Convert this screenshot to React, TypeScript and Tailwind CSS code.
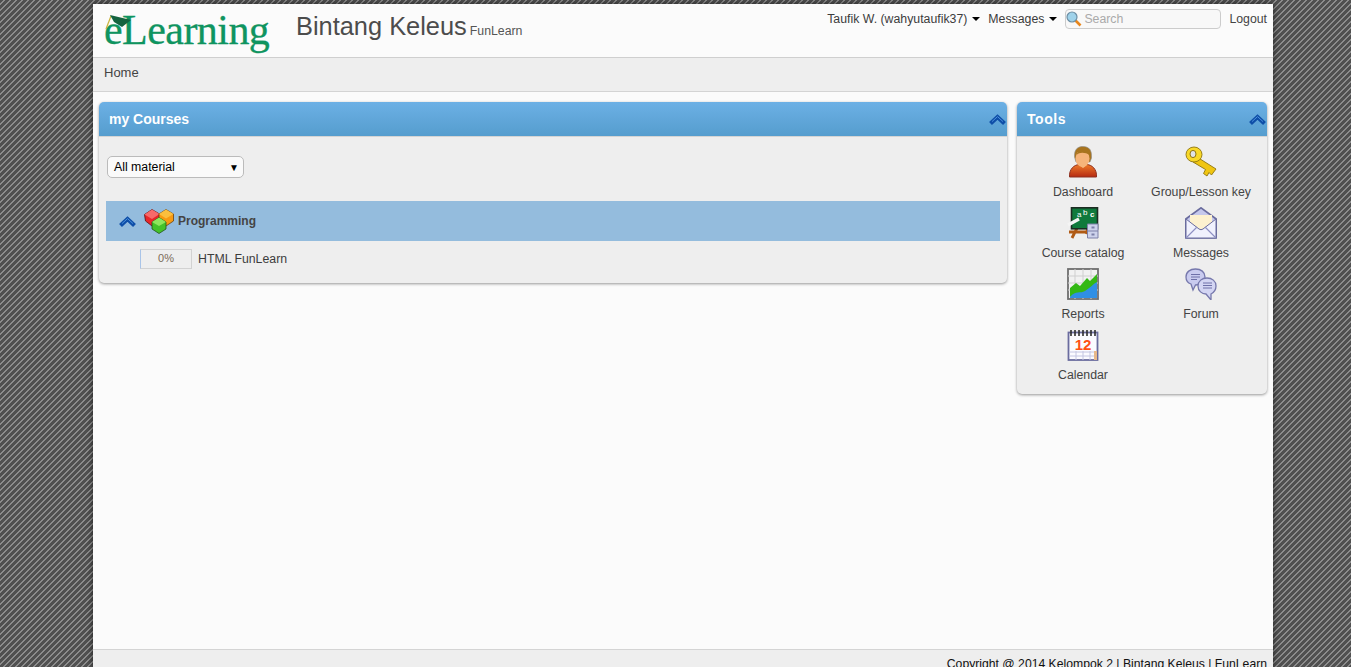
import React from "react";

const Chevron = ({ className = "" }: { className?: string }) => (
  <svg width="17" height="13" viewBox="0 0 17 13" className={className}>
    <path d="M1.5 10.5 L8.5 4 L15.5 10.5" fill="none" stroke="#0f4fa8" strokeWidth="4.2" strokeLinejoin="miter" />
    <path d="M3 8.6 L8.5 3.6 L14 8.6" fill="none" stroke="#4a90dc" strokeWidth="1" />
  </svg>
);

const Caret = () => <span className="inline-block w-0 h-0 border-x-4 border-x-transparent border-t-4 border-t-black ml-[5px] align-middle" />;

const UserIcon = () => (
  <svg width="32" height="32" viewBox="0 0 32 32">
    <defs>
      <linearGradient id="shirt" x1="0" y1="0" x2="0" y2="1">
        <stop offset="0" stopColor="#ee7a2a" />
        <stop offset="1" stopColor="#b52a12" />
      </linearGradient>
    </defs>
    <path d="M2.5 31 C2 23 7 19 12 18.5 L20 18.5 C25 19 30 23 29.5 31 Z" fill="url(#shirt)" stroke="#8e3020" />
    <path d="M11.5 18.5 L16 22 L20.5 18.5 Z" fill="#f6c08a" />
    <path d="M7.5 11 C7 3 11 0.5 16 0.5 C22 0.5 25 4 24.5 12 L23 16 L9 16 Z" fill="#a8741e" stroke="#8c8c8c" strokeWidth=".6" />
    <ellipse cx="15.5" cy="12.5" rx="7" ry="8.5" fill="#f6b47a" />
    <path d="M9 10 C11 6 18 6 22.5 9 L22 4 L12 3 Z" fill="#a8741e" />
  </svg>
);

const KeyIcon = () => (
  <svg width="32" height="32" viewBox="0 0 32 32">
    <path d="M12 11 L31 23 L26.5 29 L24 26.5 L22 30 L18.5 27.5 L20.5 23.5 L8 16 Z" fill="#f0c510" stroke="#8f7510" strokeWidth=".9" />
    <ellipse cx="9" cy="8.5" rx="8" ry="7.5" fill="#f8d828" stroke="#8f7510" strokeWidth=".9" />
    <ellipse cx="8" cy="8" rx="3" ry="3.6" fill="#dfe2e8" stroke="#8f7510" strokeWidth="1" />
  </svg>
);

const BoardIcon = () => (
  <svg width="32" height="32" viewBox="0 0 32 32">
    <path d="M10 21 L5 31 M21 21 L19 27 M2 25 H24" stroke="#b05a14" strokeWidth="2.8" fill="none" />
    <rect x="4.5" y="0.8" width="26" height="21" fill="#0f7a3c" stroke="#1c2c22" strokeWidth="1.6" />
    <path d="M1 18 L12 12" stroke="#f4f4f4" strokeWidth="3.2" />
    <text x="10" y="10" fontSize="8" fill="#fff" fontFamily="'Liberation Sans',sans-serif">a</text>
    <text x="16" y="8" fontSize="8" fill="#fff" fontFamily="'Liberation Sans',sans-serif">b</text>
    <text x="23" y="10" fontSize="8" fontWeight="bold" fill="#fff" fontFamily="'Liberation Sans',sans-serif">c</text>
    <path d="M20.5 17 H31 V31 H20.5 Z" fill="#cdd2ec" stroke="#7c80a8" />
    <path d="M20.5 24 H31" stroke="#7c80a8" />
    <rect x="24.5" y="19.5" width="3" height="2" fill="#7c80a8" />
    <rect x="24.5" y="26.5" width="3" height="2" fill="#7c80a8" />
  </svg>
);

const MailIcon = () => (
  <svg width="32" height="32" viewBox="0 0 32 32">
    <path d="M0.8 12 L16 0.8 L31.2 12 V31 H0.8 Z" fill="#c5c8ec" stroke="#6a6c9e" strokeWidth="1.6" />
    <path d="M5 8 H27 V17 L16 24 L5 17 Z" fill="#fdf1cf" />
    <path d="M1 12 L14 22 Q16 23.5 18 22 L31 12 V31 H1 Z" fill="#f0f1fd" stroke="#6a6c9e" />
    <path d="M1 31 L12 20 M31 31 L20 20" stroke="#8e90c2" strokeWidth="1.2" />
  </svg>
);

const ChartIcon = () => (
  <svg width="32" height="32" viewBox="0 0 32 32">
    <rect x="1" y="1" width="30" height="30" fill="#f1f1f1" stroke="#6e6e6e" strokeWidth="1.8" />
    <path d="M1 8 H31 M1 15 H31 M1 22 H31 M8 1 V31 M16 1 V31 M24 1 V31" stroke="#cfcfcf" />
    <path d="M3 20 L9 15 L13 18 L20 10 L23 13 L30 6 V20 L3 29 Z" fill="#33b814" />
    <path d="M3 29 C9 22 13 26 18 23 C23 20 26 16 30 14 V30 H3 Z" fill="#2f8fe4" />
  </svg>
);

const ForumIcon = () => (
  <svg width="32" height="32" viewBox="0 0 32 32">
    <path d="M1 9 C1 4 5 1 10.5 1 C16 1 20 4 20 9 C20 14 16 17 10.5 17 L8 22 L6 16 C3 15 1 12 1 9 Z" fill="#c9cbef" stroke="#7678ac" strokeWidth="1.3" />
    <path d="M6 6.5 H15 M6 9 H15 M6 11.5 H12" stroke="#6e70a8" />
    <path d="M13 18 C13 13 17 10 22 10 C27 10 31 13 31 18 C31 23 28 25 26 26 L26 32 L21 26 C17 26 13 23 13 18 Z" fill="#d3d5f3" stroke="#7678ac" strokeWidth="1.3" />
    <path d="M18 15 H27 M18 17.5 H27 M18 20 H27" stroke="#6e70a8" />
  </svg>
);

const CalendarIcon = () => (
  <svg width="32" height="32" viewBox="0 0 32 32">
    <rect x="1.5" y="3.5" width="29" height="27.5" fill="#fbfbff" stroke="#6a6c9e" strokeWidth="1.8" />
    <path d="M2 23 H30 M2 27 H30 M9 22 V31 M16 22 V31 M23 22 V31" stroke="#c4c6e2" />
    <path d="M4 1 V7 M8 1 V7 M12 1 V7 M16 1 V7 M20 1 V7 M24 1 V7 M28 1 V7" stroke="#2e2e2e" strokeWidth="1.6" />
    <rect x="27" y="22" width="3" height="9" fill="#e8b98a" />
    <text x="16" y="21" fontSize="15" fontWeight="bold" fill="#ff5014" textAnchor="middle" fontFamily="'Liberation Sans',sans-serif">12</text>
  </svg>
);

const CubesIcon = () => (
  <svg width="30" height="25" viewBox="0 0 30 25" className="ml-[8px]">
    <path d="M0.5 5.5 L8 0.5 L15.5 5 L15 12 L8 17 L1.5 12 Z" fill="#e8262a" stroke="#5a1212" strokeWidth=".8" />
    <path d="M0.5 5.5 L8 10 L15.5 5 L8 0.5 Z" fill="#f76a6a" />
    <path d="M15 5 L22 0.5 L29.5 5 L29.5 12 L22 17 L15 12 Z" fill="#f79a12" stroke="#6a4210" strokeWidth=".8" />
    <path d="M15 5 L22 9.5 L29.5 5 L22 0.5 Z" fill="#fbbf3d" />
    <path d="M8 13 L15 8.5 L22 13 L22 20 L15 24.5 L8 20 Z" fill="#44c22a" stroke="#25561a" strokeWidth=".8" />
    <path d="M8 13 L15 17 L22 13 L15 8.5 Z" fill="#8ee65c" />
  </svg>
);

const SearchIcon = () => (
  <svg width="16" height="16" viewBox="0 0 16 16">
    <path d="M9.5 9.5 L14.5 14.5" stroke="#e8861c" strokeWidth="2.6" />
    <circle cx="6" cy="6" r="5" fill="#9fd2ea" stroke="#6c8ea4" strokeWidth="1.2" />
  </svg>
);

const tools: [string, React.ReactNode][] = [
  ["Dashboard", <UserIcon />],
  ["Group/Lesson key", <KeyIcon />],
  ["Course catalog", <BoardIcon />],
  ["Messages", <MailIcon />],
  ["Reports", <ChartIcon />],
  ["Forum", <ForumIcon />],
  ["Calendar", <CalendarIcon />],
];

const PanelHead = ({ title, spaced }: { title: string; spaced?: boolean }) => (
  <div className="h-[35px] rounded-t-[5px] bg-gradient-to-b from-[#6cb0e5] to-[#559dce] border-b border-[#d4d4d4] flex items-center justify-between pl-[10px] pr-[1px]">
    <span className={spaced ? "text-white font-bold text-[14px] tracking-[0.55px]" : "text-white font-bold text-[14px]"}>{title}</span>
    <Chevron />
  </div>
);

export default function App() {
  return (
    <div className="h-screen overflow-hidden pt-[4px] pl-[93px] bg-[repeating-linear-gradient(135deg,#505050_0px,#505050_2.55px,#8c8c8c_2.55px,#8c8c8c_4.2426px)] font-['Liberation_Sans',Arial,sans-serif] text-[12.3px] text-[#3c3c3c]">
      <div className="w-[1180px] h-[663px] bg-[#fbfbfb] shadow-[0_0_6px_rgba(0,0,0,0.6)] flex flex-col overflow-hidden">
        <header className="h-[54px] shrink-0 border-b border-[#cfcfcf] flex items-start">
          <div className="relative w-[203px] pl-[11px] h-full">
            <span className="block font-['Liberation_Serif',serif] text-[42px] leading-[52px] text-[#0f9460] [-webkit-text-stroke:0.3px_#0f9460] tracking-[-0.55px] whitespace-nowrap">eLearning</span>
            <svg width="30" height="20" viewBox="0 0 30 20" className="absolute left-[10px] top-[9px]">
              <path d="M3 16 L8 3" stroke="#c9b23a" strokeWidth="1.2" />
              <path d="M7 2 L28 7 L19 14 L11 9 Z" fill="#14633f" />
            </svg>
          </div>
          <div className="pt-[6px] flex items-baseline whitespace-nowrap">
            <span className="text-[25.4px] leading-[32px] text-[#4c4c4c]">Bintang Keleus</span>
            <span className="text-[#555] ml-[3px]">FunLearn</span>
          </div>
          <div className="ml-auto pr-[6px] pt-[2px] flex items-center h-[28px] whitespace-nowrap">
            <span>Taufik W. (wahyutaufik37)</span>
            <Caret />
            <span className="ml-[8px]">Messages</span>
            <Caret />
            <div className="ml-[8px] w-[156px] h-[20px] border border-[#ccc] rounded-[4px] bg-[#f8f8f8] flex items-center text-[#aaa]">
              <SearchIcon />
              <span className="ml-[2px]">Search</span>
            </div>
            <span className="ml-[8px] text-[#444]">Logout</span>
          </div>
        </header>

        <nav className="h-[34px] shrink-0 bg-[#eeeeee] border-b border-[#d4d4d4] pl-[11px] pb-[4px] flex items-center text-[13px] text-[#444]">Home</nav>

        <main className="flex-1 flex items-start pt-[10px] pl-[6px] gap-[10px]">
          <section className="w-[908px] h-[181px] rounded-[5px] bg-[#eeeeee] shadow-[0_1px_3px_rgba(0,0,0,0.4)]">
            <PanelHead title="my Courses" />
            <div className="px-[7px] pt-[19px]">
              <div className="ml-[1px] w-[137px] h-[22px] rounded-[5px] border border-[#bbb] bg-[#fafafa] flex items-center justify-between pl-[6px] pr-[4px] text-black">
                <span>All material</span>
                <span className="text-[10px]">▼</span>
              </div>
              <div className="mt-[23px] h-[40px] w-[894px] bg-[#94bcdd] flex items-center pl-[13px]">
                <Chevron className="w-[17px]" />
                <CubesIcon />
                <span className="ml-[4px] font-bold text-[12px] text-[#444]">Programming</span>
              </div>
              <div className="mt-[8px] ml-[34px] flex items-center">
                <div className="w-[52px] h-[20px] border border-[#d2d2d2] border-l-[#a9c4e8] text-center text-[11px] leading-[17px] text-[#7a6a58]">0%</div>
                <span className="ml-[6px]">HTML FunLearn</span>
              </div>
            </div>
          </section>

          <section className="w-[250px] h-[292px] rounded-[5px] bg-[#eeeeee] shadow-[0_1px_3px_rgba(0,0,0,0.4)]">
            <PanelHead title="Tools" spaced />
            <div className="grid grid-cols-2 w-[236px] ml-[7px] pt-[9px]">
              {tools.map(([label, icon]) => (
                <div key={label} className="h-[61px] flex flex-col items-center">
                  <div className="h-[32px] w-[32px]">{icon}</div>
                  <span className="mt-[6px] leading-[16px] text-[#444] whitespace-nowrap">{label}</span>
                </div>
              ))}
            </div>
          </section>
        </main>

        <footer className="h-[18px] shrink-0 bg-[#eeeeee] border-t border-[#d4d4d4] pr-[6px] pt-[6px] text-right text-[12.2px] leading-[16px] text-[#111]">
          Copyright @ 2014 Kelompok 2 | Bintang Keleus | FunLearn
        </footer>
      </div>
    </div>
  );
}
